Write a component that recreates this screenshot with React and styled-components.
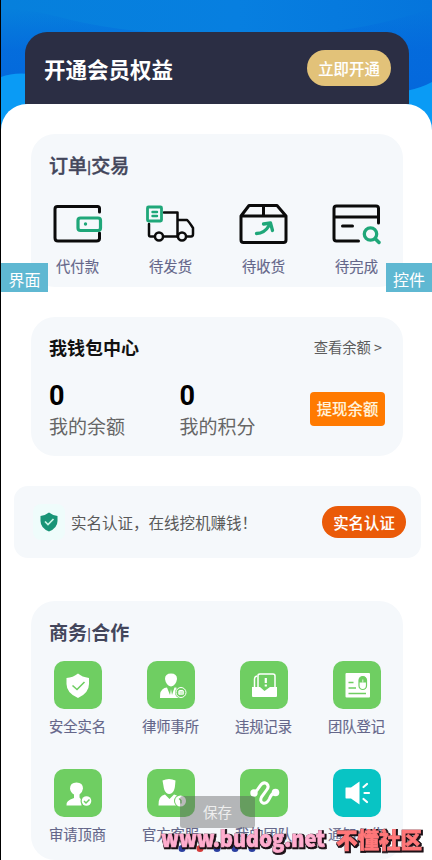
import React from "react"
import styled, { createGlobalStyle } from "styled-components"

const GlobalStyle = createGlobalStyle`
  * {
    box-sizing: border-box;
  }

  body {
    margin: 0;
    background: #fff;
    font-family: "Noto Sans CJK SC", sans-serif;
    overflow: hidden;
  }
`

const Page = styled.div`
  position: relative;
  width: 432px;
  height: 860px;
  overflow: hidden;
  background: #0a9bf5;
  border-left: 1px solid #000;
`

const HeroArt = styled.svg`
  position: absolute;
  top: 0;
  left: 0;
`

const Hero = styled.header`
  position: relative;
  height: 104px;
  padding: 32px 23px 0 24px;
`

const MemberBar = styled.div`
  display: flex;
  align-items: center;
  justify-content: space-between;
  height: 72px;
  padding: 0 18px 0 19px;
  border-radius: 22px 22px 0 0;
  background: #2b2e44;
`

const MemberTitle = styled.h1`
  margin: 1px 0 0;
  color: #fff;
  font-size: 21.5px;
  font-weight: 700;
  line-height: 30px;
`

const Button = styled.button`
  flex: none;
  width: ${({ $width }) => $width}px;
  height: ${({ $height }) => $height}px;
  padding: 1px 0 0;
  border: 0;
  border-radius: ${({ $radius }) => $radius}px;
  background: ${({ $bg }) => $bg};
  color: ${({ $color }) => $color || "#fff"};
  font-family: inherit;
  font-size: 15.4px;
  font-weight: 500;
  line-height: 1;
  white-space: nowrap;
  -webkit-text-stroke: 0.1px currentColor;
`

const Sheet = styled.main`
  position: relative;
  display: flex;
  flex-direction: column;
  gap: 30px;
  height: 756px;
  padding-top: 30px;
  border-radius: 26px 26px 0 0;
  background: #fff;
`

const Card = styled.section`
  flex: none;
  width: 372px;
  height: ${({ $height }) => $height}px;
  margin: ${({ $top }) => $top || 0}px 0 0 30px;
  padding-top: 17px;
  border-radius: 24px;
  background: #f5f8fb;
`

const CardTitle = styled.h2`
  margin: 0 0 0 18px;
  color: #43465b;
  font-size: 19px;
  font-weight: ${({ $weight }) => $weight || 500};
  line-height: 28px;
  -webkit-text-stroke: ${({ $weight }) => ($weight ? 0 : 0.4)}px currentColor;
`

const Divider = styled.span`
  font-family: Roboto, sans-serif;
  font-size: 17px;
  font-weight: 400;
  line-height: 1;
`

const Grid = styled.div`
  display: grid;
  grid-template-columns: repeat(4, 93px);
  row-gap: ${({ $gap }) => $gap || 0}px;
  margin-top: ${({ $top }) => $top}px;
`

const Item = styled.div`
  display: flex;
  flex-direction: column;
  align-items: center;
`

const ItemLabel = styled.span`
  margin-top: ${({ $top }) => $top}px;
  color: #65678a;
  font-size: 14.3px;
  line-height: 20px;
  white-space: nowrap;
  -webkit-text-stroke: 0.15px currentColor;
`

const Tile = styled.div`
  display: flex;
  align-items: center;
  justify-content: center;
  width: 48px;
  height: 48px;
  border-radius: 10px;
  background: ${({ $bg }) => $bg || "#6fce62"};
`

const WalletHead = styled.div`
  display: flex;
  align-items: center;
  justify-content: space-between;
  padding: 0 21px 0 18px;
  height: 26px;
`

const WalletTitle = styled.h2`
  margin: 0;
  color: #111;
  font-size: 18px;
  font-weight: 700;
  line-height: 26px;
`

const WalletLink = styled.span`
  color: #5c5c5c;
  font-size: 14.3px;
  line-height: 20px;
`

const WalletBody = styled.div`
  display: flex;
  align-items: center;
  padding: 0 18px;
  margin-top: 18px;
`

const Stat = styled.div`
  width: 131px;
`

const StatValue = styled.div`
  padding-top: 2px;
  color: #000;
  font-family: Roboto, sans-serif;
  font-size: 27px;
  font-weight: 700;
  line-height: 33px;
`

const StatLabel = styled.div`
  color: #666;
  font-size: 19px;
  line-height: 26px;
`

const Banner = styled.section`
  display: flex;
  flex: none;
  align-items: center;
  width: 407px;
  height: 72px;
  margin-left: 13px;
  padding: 0 15px 0 19px;
  border-radius: 14px;
  background: #f5f8fb;
`

const Halo = styled.div`
  display: flex;
  align-items: center;
  justify-content: center;
  width: 32px;
  height: 36px;
  border-radius: 8px;
  background: #effcfb;
`

const BannerText = styled.span`
  flex: 1;
  margin-left: 6px;
  color: #595959;
  font-size: 15.5px;
  line-height: 22px;
`

const SideTag = styled.div`
  position: absolute;
  top: 263px;
  ${({ $side }) => $side}: 0;
  width: ${({ $width }) => $width}px;
  height: 29px;
  padding-top: 2px;
  background: #5fb8d2;
  color: #fff;
  font-size: 16px;
  line-height: 28px;
  text-align: center;
`

const Toast = styled.div`
  position: absolute;
  top: 796px;
  left: 179px;
  width: 75px;
  height: 32px;
  border-radius: 3px;
  background: rgba(90, 90, 90, 0.42);
  color: #eee;
  font-size: 14.5px;
  line-height: 32px;
  text-align: center;
`

const Watermark = styled.svg`
  position: absolute;
  left: 155px;
  top: 822px;
`

const WatermarkText = styled.text`
  font-family: "Noto Sans CJK SC", sans-serif;
  font-weight: 900;
  stroke-linejoin: miter;
  stroke-miterlimit: 2;
`

const GREEN = "#1fa779"
const TILE_GREEN = "#6fce62"

const LineIcon = ({ children }) => (
  <svg
    width="54"
    height="44"
    viewBox="0.5 0 54 44"
    fill="none"
    stroke="#0b0b0b"
    strokeWidth="3"
    strokeLinecap="round"
    strokeLinejoin="round"
  >
    {children}
  </svg>
)

const WalletIcon = () => (
  <LineIcon>
    <path d="M49 9V5.500Q49 3.500 47 3.500H7Q4.500 3.500 4.500 6V35Q4.500 38 7.500 38H46Q49 38 49 35.500V30" />
    <rect x="27.500" y="15" width="22.500" height="12.500" rx="2.500" stroke={GREEN} strokeWidth="3.200" />
    <circle cx="35" cy="21" r="1.700" fill={GREEN} stroke="none" />
  </LineIcon>
)

const TruckIcon = () => (
  <LineIcon>
    <g strokeWidth="2.500">
      <path d="M20.500 9.500H34V34M5.500 21V32Q5.500 33.500 7 33.500H11M20.500 33.500H33M43 33.500H47.500Q49.500 33.500 49.500 31V25Q45 18 43.500 17H35" />
      <circle cx="15.500" cy="33.500" r="4" />
      <circle cx="38.500" cy="33.500" r="4" />
    </g>
    <rect x="4" y="4" width="14" height="14" rx="1" stroke={GREEN} strokeWidth="2.800" />
    <path d="M9 9H13.500M9 13H13.500" stroke={GREEN} strokeWidth="2.400" />
  </LineIcon>
)

const BoxIcon = () => (
  <LineIcon>
    <path d="M4.500 13L12.500 2.500H40.500L49.500 13V37Q49.500 39.500 47 39.500H7Q4.500 39.500 4.500 37ZM4.500 13H49.500M27 3V12.500" />
    <path d="M20 30.500Q28 30.500 33 22M27 21L34 20L36 27.500" stroke={GREEN} strokeWidth="3.300" />
  </LineIcon>
)

const RecordIcon = () => (
  <LineIcon>
    <path d="M29 38H7Q4.500 38 4.500 35.500V5.500Q4.500 3 7 3H46.500Q49 3 49 5.500V20M5 14H48.500M13 23H23" />
    <circle cx="41" cy="31" r="6.200" stroke={GREEN} strokeWidth="3.300" />
    <path d="M46 36L49.500 39.500" stroke={GREEN} strokeWidth="3.500" />
  </LineIcon>
)

const TileIcon = ({ children }) => (
  <svg width="48" height="48" viewBox="0 0 48 48" fill="#fff">
    {children}
  </svg>
)

const ShieldIcon = () => (
  <TileIcon>
    <path d="M24 12.500Q28 16 35 17V23Q35 32 24 37Q12.500 32 12.500 23V17Q19 16.500 24 12.500Z" />
    <path d="M18.500 24.500L23 28.500L30.500 21" fill="none" stroke={TILE_GREEN} strokeWidth="1.600" />
  </TileIcon>
)

const LawyerIcon = () => (
  <TileIcon>
    <path d="M18 18Q18 12.500 24 12.500Q30 12.500 30 18Q29 24.500 24 25.500Q19 24.500 18 18Z" />
    <path d="M13 37Q12.500 29 17.500 27L20 26.500L23 34L24 28L25 34L27.500 26.500Q31 26 33 29V37Z" />
    <circle cx="34" cy="31.500" r="6" fill={TILE_GREEN} />
    <circle cx="34" cy="31.500" r="5" fill="none" stroke="#fff" strokeWidth="1" />
    <rect x="31.300" y="29" width="5.500" height="5" rx="1.500" />
    <path d="M32.500 31H36M32.500 33H36" stroke={TILE_GREEN} strokeWidth="0.600" />
  </TileIcon>
)

const InboxIcon = () => (
  <TileIcon>
    <path d="M14.500 27V18Q14.500 15.500 17 15M18 27V14.500Q18 13 20 13H33Q35 13 35 15V26" fill="none" stroke="#fff" strokeWidth="1.500" />
    <path d="M12 26H20L24.500 30L30 26H37V35Q37 36 36 36H13Q12 36 12 35Z" />
    <path d="M25.800 17V22M25.800 23.500V25.500" stroke="#fff" strokeWidth="2.200" />
  </TileIcon>
)

const FormIcon = () => (
  <TileIcon>
    <rect x="12.500" y="12" width="24.500" height="24.500" rx="1" />
    <path d="M15.500 21.500H20.500M15.500 27H23M15.500 32.500H33" stroke={TILE_GREEN} strokeWidth="1.700" />
    <rect x="26" y="15.500" width="7.500" height="13" rx="3.700" fill="#fff" stroke={TILE_GREEN} strokeWidth="1.200" />
    <path d="M26 21.500V19Q26 15.500 29.800 15.500Q33.500 15.500 33.500 19V21.500Z" fill={TILE_GREEN} />
    <path d="M29.800 18.500V21.500" stroke="#fff" strokeWidth="0.800" />
  </TileIcon>
)

const ApplicantIcon = () => (
  <TileIcon>
    <path d="M16 19.500Q16 13.500 22.500 13.500Q29 13.500 29 19.500Q28.500 23.500 25.500 25.500V28.500L27.500 31V36.500H12.500Q11.500 31.500 20 29V25.500Q16.500 23.500 16 19.500Z" />
    <circle cx="32.500" cy="32" r="6" fill={TILE_GREEN} />
    <circle cx="32.500" cy="32" r="4.800" />
    <path d="M30 32L32 34L35.500 30.500" fill="none" stroke={TILE_GREEN} strokeWidth="1.500" />
  </TileIcon>
)

const ServiceIcon = () => (
  <TileIcon>
    <path d="M15.500 11.500Q22 8.500 28.500 11.500L28 17Q27.500 22 25 24Q22 26 19.500 24Q17 22 16.500 17Z" />
    <path d="M11.500 36.500Q11 27 18 25.500L22.500 30L27 25.500Q32 26.500 32.500 31V36.500Z" />
    <circle cx="33.500" cy="32" r="6.500" fill={TILE_GREEN} />
    <circle cx="33.500" cy="32" r="5.500" />
    <path d="M32 29.500L34 31.500V34.500" fill="none" stroke={TILE_GREEN} strokeWidth="1.300" />
  </TileIcon>
)

const RouteIcon = () => (
  <TileIcon>
    <path
      d="M14 24Q17 22 20 17Q23 12.500 26.500 14.500Q29.500 17 27 20.500L21.500 28Q19.500 32.500 23 34Q27 35 29.500 29.500Q31.500 24.500 35 23.500"
      fill="none"
      stroke="#fff"
      strokeWidth="3"
      strokeLinecap="round"
    />
    <circle cx="14" cy="24" r="3.700" />
    <circle cx="35.500" cy="23.500" r="3.800" />
  </TileIcon>
)

const SpeakerIcon = () => (
  <TileIcon>
    <path d="M13 18.500H18L26.500 12.500V35.500L18 29.500H13Q12.500 29.500 12.500 28.500V19.500Q12.500 18.500 13 18.500Z" />
    <path d="M30.500 18L34 15M31.500 24H36M30.500 30L34 33" stroke="#fff" strokeWidth="2.200" strokeLinecap="round" />
  </TileIcon>
)

const orders = [
  { label: "代付款", Icon: WalletIcon },
  { label: "待发货", Icon: TruckIcon },
  { label: "待收货", Icon: BoxIcon },
  { label: "待完成", Icon: RecordIcon },
]

const services = [
  { label: "安全实名", Icon: ShieldIcon },
  { label: "律师事所", Icon: LawyerIcon },
  { label: "违规记录", Icon: InboxIcon },
  { label: "团队登记", Icon: FormIcon },
  { label: "审请顶商", Icon: ApplicantIcon },
  { label: "官方客服", Icon: ServiceIcon },
  { label: "我的团队", Icon: RouteIcon },
  { label: "通知公告", Icon: SpeakerIcon, bg: "#08c4c4" },
]

const dots = [
  { x: 26, color: "#2b3fa0" },
  { x: 44, color: "#d33a3a" },
  { x: 61, color: "#2b3fa0" },
  { x: 79, color: "#2b3fa0" },
  { x: 96, color: "#2b3fa0" },
]

// coloured face with a dark edge dropped to the lower right
const OutlinedText = ({ x, y, length, color, children }) => (
  <WatermarkText
    x={x}
    y={y}
    fontSize="22"
    textLength={length}
    lengthAdjust="spacingAndGlyphs"
    fill={color}
    stroke={color}
    strokeWidth="0.700"
    filter="url(#outline)"
  >
    {children}
  </WatermarkText>
)

const App = () => (
  <>
    <GlobalStyle />
    <Page>
      <HeroArt width="431" height="134" viewBox="0 0 431 134">
        <defs>
          <linearGradient id="sky" x1="0" y1="0" x2="1" y2="0">
            <stop offset="0" stopColor="#0680dc" />
            <stop offset="0.55" stopColor="#077fe0" />
            <stop offset="1" stopColor="#0575dc" />
          </linearGradient>
          <linearGradient id="shade" x1="0" y1="0" x2="0" y2="1">
            <stop offset="0" stopColor="#0468dc" stopOpacity="0" />
            <stop offset="0.5" stopColor="#0468dc" stopOpacity="0.8" />
            <stop offset="1" stopColor="#0468dc" />
          </linearGradient>
        </defs>
        <rect width="431" height="134" fill="url(#sky)" />
        <path d="M0 8Q30 9 70 20Q130 34 200 34H300Q370 30 431 8V92H0Z" fill="url(#shade)" />
        <path d="M0 77Q12 72 30 74V134H0ZM405 91Q420 88 431 82V134H405Z" fill="#0a9bf5" />
      </HeroArt>
      <Hero>
        <MemberBar>
          <MemberTitle>开通会员权益</MemberTitle>
          <Button $width={84} $height={36} $radius={18} $bg="#e2c279">
            立即开通
          </Button>
        </MemberBar>
      </Hero>
      <Sheet>
        <Card $height={153}>
          <CardTitle>
            订单<Divider>|</Divider>交易
          </CardTitle>
          <Grid $top={24}>
            {orders.map(({ label, Icon }) => (
              <Item key={label}>
                <Icon />
                <ItemLabel $top={9}>{label}</ItemLabel>
              </Item>
            ))}
          </Grid>
        </Card>
        <Card $height={139}>
          <WalletHead>
            <WalletTitle>我钱包中心</WalletTitle>
            <WalletLink>查看余额 &gt;</WalletLink>
          </WalletHead>
          <WalletBody>
            <Stat>
              <StatValue>0</StatValue>
              <StatLabel>我的余额</StatLabel>
            </Stat>
            <Stat>
              <StatValue>0</StatValue>
              <StatLabel>我的积分</StatLabel>
            </Stat>
            <Button $width={75} $height={34} $radius={4} $bg="#ff7a00" $color="#fff3dc">
              提现余额
            </Button>
          </WalletBody>
        </Card>
        <Banner>
          <Halo>
            <svg width="18" height="20" viewBox="0 0 18 20">
              <path d="M9 0.500Q12 3 17.500 4V9Q17.500 16 9 19.500Q0.500 16 0.500 9V4Q6 3 9 0.500Z" fill="#199477" />
              <path d="M5 9.500L8 12.500L13.500 7" fill="none" stroke="#c9f5e6" strokeWidth="1.700" />
            </svg>
          </Halo>
          <BannerText>实名认证，在线挖机赚钱！</BannerText>
          <Button $width={84} $height={32} $radius={16} $bg="#ea5a08">
            实名认证
          </Button>
        </Banner>
        <Card $height={259} $top={13}>
          <CardTitle $weight={700}>
            商务<Divider>|</Divider>合作
          </CardTitle>
          <Grid $top={15} $gap={33}>
            {services.map(({ label, Icon, bg }) => (
              <Item key={label}>
                <Tile $bg={bg}>
                  <Icon />
                </Tile>
                <ItemLabel $top={7}>{label}</ItemLabel>
              </Item>
            ))}
          </Grid>
        </Card>
      </Sheet>
      <SideTag $side="left" $width={47}>界面</SideTag>
      <SideTag $side="right" $width={46}>控件</SideTag>
      <Toast>保存</Toast>
      <Watermark width="276" height="38" viewBox="0 0 276 38">
        <defs>
          <filter id="outline" x="-5%" y="-20%" width="110%" height="140%" colorInterpolationFilters="sRGB">
            <feMorphology in="SourceAlpha" operator="dilate" radius="0.6" result="edge" />
            <feOffset in="edge" dx="0.6" dy="0.7" result="drop" />
            <feFlood floodColor="#1c1016" />
            <feComposite in2="drop" operator="in" result="shadow" />
            <feMerge>
              <feMergeNode in="shadow" />
              <feMergeNode in="SourceGraphic" />
            </feMerge>
          </filter>
        </defs>
        {dots.map(({ x, color }) => (
          <circle key={x} cx={x} cy="26.500" r="3.500" fill={color} />
        ))}
        <OutlinedText x="5" y="24.500" length="164" color="#ffadce">
          www.budog.net
        </OutlinedText>
        <OutlinedText x="180" y="26" length="86" color="#ff7779">
          不懂社区
        </OutlinedText>
      </Watermark>
    </Page>
  </>
)

export default App
